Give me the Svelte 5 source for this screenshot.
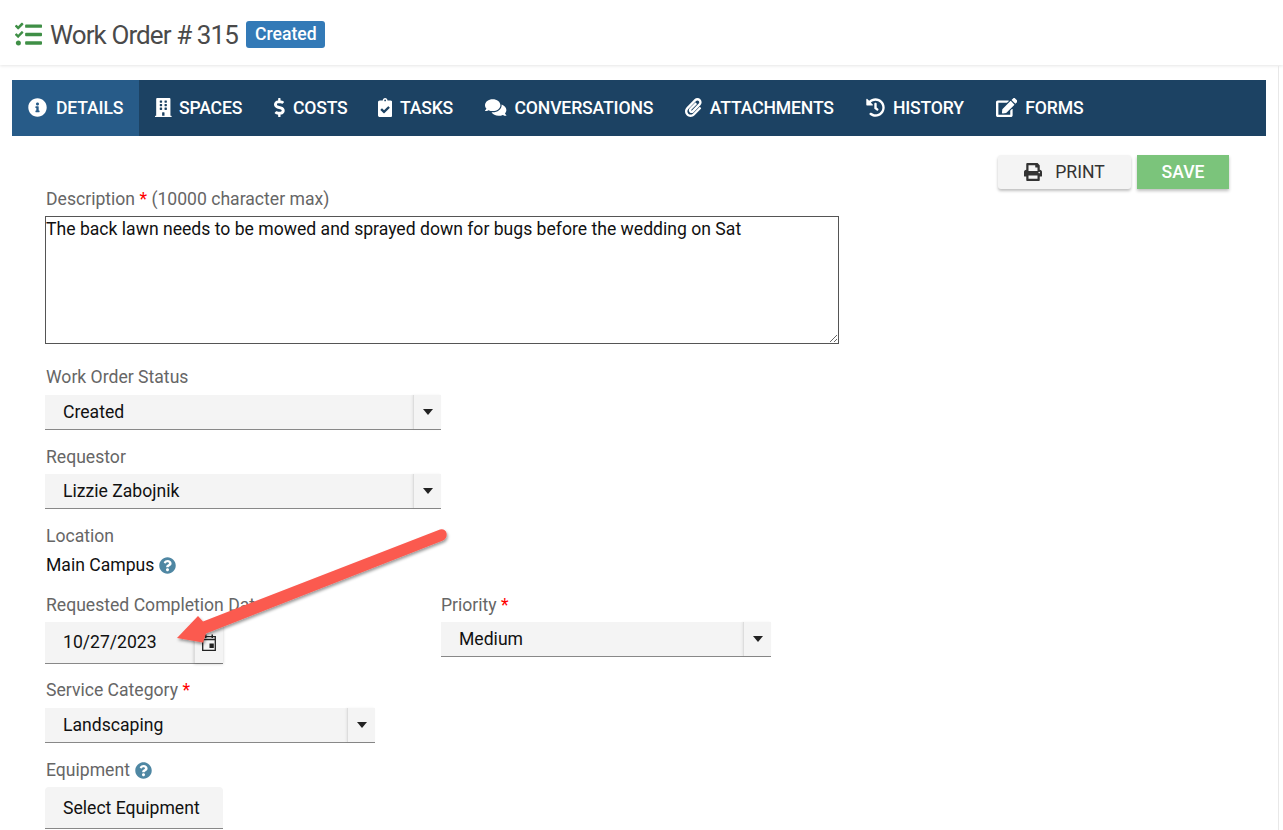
<script>
  const icons = {
    info: [512, 'M256 8C119.043 8 8 119.083 8 256c0 136.997 111.043 248 248 248s248-111.003 248-248C504 119.083 392.957 8 256 8zm0 110c23.196 0 42 18.804 42 42s-18.804 42-42 42-42-18.804-42-42 18.804-42 42-42zm56 254c0 6.627-5.373 12-12 12h-88c-6.627 0-12-5.373-12-12v-24c0-6.627 5.373-12 12-12h12v-64h-12c-6.627 0-12-5.373-12-12v-24c0-6.627 5.373-12 12-12h64c6.627 0 12 5.373 12 12v100h12c6.627 0 12 5.373 12 12v24z'],
    building: [448, 'M436 480h-20V24c0-13.255-10.745-24-24-24H56C42.745 0 32 10.745 32 24v456H12c-6.627 0-12 5.373-12 12v20h448v-20c0-6.627-5.373-12-12-12zM128 76c0-6.627 5.373-12 12-12h40c6.627 0 12 5.373 12 12v40c0 6.627-5.373 12-12 12h-40c-6.627 0-12-5.373-12-12V76zm0 96c0-6.627 5.373-12 12-12h40c6.627 0 12 5.373 12 12v40c0 6.627-5.373 12-12 12h-40c-6.627 0-12-5.373-12-12v-40zm52 148h-40c-6.627 0-12-5.373-12-12v-40c0-6.627 5.373-12 12-12h40c6.627 0 12 5.373 12 12v40c0 6.627-5.373 12-12 12zm76 160h-64v-84c0-6.627 5.373-12 12-12h40c6.627 0 12 5.373 12 12v84zm64-172c0 6.627-5.373 12-12 12h-40c-6.627 0-12-5.373-12-12v-40c0-6.627 5.373-12 12-12h40c6.627 0 12 5.373 12 12v40zm0-96c0 6.627-5.373 12-12 12h-40c-6.627 0-12-5.373-12-12v-40c0-6.627 5.373-12 12-12h40c6.627 0 12 5.373 12 12v40zm0-96c0 6.627-5.373 12-12 12h-40c-6.627 0-12-5.373-12-12V76c0-6.627 5.373-12 12-12h40c6.627 0 12 5.373 12 12v40z'],
    dollar: [288, 'M209.2 233.4l-108-31.6C88.7 198.2 80 186.5 80 173.5c0-16.3 13.2-29.5 29.5-29.5h66.3c12.2 0 24.2 3.7 34.2 10.5 6.1 4.1 14.3 3.1 19.5-2l34.8-34c7.1-6.9 6.1-18.4-1.8-24.5C238 74.8 207.4 64.1 176 64V16c0-8.8-7.2-16-16-16h-32c-8.8 0-16 7.2-16 16v48h-2.5C45.8 64-5.4 118.7.5 183.6c4.2 46.1 39.4 83.6 83.8 96.6l102.5 30c12.5 3.7 21.2 15.3 21.2 28.3 0 16.3-13.2 29.5-29.5 29.5h-66.3C100 368 88 364.3 78 357.5c-6.1-4.1-14.3-3.1-19.5 2l-34.8 34c-7.1 6.9-6.1 18.4 1.8 24.5 24.5 19.2 55.1 29.9 86.5 30v48c0 8.8 7.2 16 16 16h32c8.8 0 16-7.2 16-16v-48.2c46.6-.9 90.3-28.6 105.7-72.7 21.5-61.6-14.6-124.8-72.5-141.7z'],
    task: [384, 'M336 64h-80c0-35.3-28.7-64-64-64s-64 28.7-64 64H48C21.5 64 0 85.5 0 112v352c0 26.5 21.5 48 48 48h288c26.5 0 48-21.5 48-48V112c0-26.5-21.5-48-48-48zM192 40c13.3 0 24 10.7 24 24s-10.7 24-24 24-24-10.7-24-24 10.7-24 24-24zm121.2 231.8l-143 141.800c-4.7 4.7-12.3 4.600-17-.1l-82.600-83.300c-4.700-4.700-4.600-12.300.1-17L99.100 285c4.700-4.700 12.300-4.600 17 .1l46 46.400 106-105.200c4.700-4.700 12.300-4.600 17 .1l28.200 28.400c4.700 4.800 4.600 12.300-.1 17z'],
    comments: [576, 'M416 192c0-88.400-93.100-160-208-160S0 103.600 0 192c0 34.300 14.100 65.900 38 92-13.400 30.200-35.500 54.200-35.800 54.500-2.200 2.300-2.800 5.700-1.500 8.700S4.800 352 8 352c36.600 0 66.900-12.300 88.700-25 32.200 15.700 70.300 25 111.300 25 114.900 0 208-71.600 208-160zm122 220c23.900-26 38-57.700 38-92 0-66.900-53.500-124.200-129.300-148.100.9 6.600 1.300 13.300 1.300 20.100 0 105.900-107.700 192-240 192-10.800 0-21.300-.8-31.700-1.900C207.800 439.600 281.800 480 368 480c41 0 79.100-9.200 111.300-25 21.800 12.700 52.100 25 88.700 25 3.200 0 6.100-1.900 7.300-4.800 1.300-2.900.7-6.300-1.500-8.700-.3-.3-22.400-24.200-35.800-54.500z'],
    clip: [448, 'M43.246 466.142c-58.430-60.289-57.341-157.511 1.386-217.581L254.392 34c44.316-45.332 116.351-45.336 160.671 0 43.890 44.894 43.943 117.329 0 162.276L232.214 383.128c-29.855 30.537-78.633 30.111-107.982-.998-28.275-29.970-27.368-77.473 1.452-106.953l143.743-146.835c6.182-6.314 16.312-6.422 22.626-.241l22.861 22.379c6.315 6.182 6.422 16.312.241 22.626L171.427 319.927c-4.932 5.045-5.236 13.428-.648 18.292 4.372 4.634 11.245 4.711 15.688.165l182.849-186.851c19.613-20.065 19.613-52.724-.011-72.790-19.189-19.627-49.957-19.637-69.154 0L90.390 293.295c-34.763 35.560-35.299 93.120-1.191 128.313 34.010 35.093 88.985 35.137 123.058.286l172.060-175.999c6.177-6.319 16.307-6.433 22.626-.256l22.877 22.364c6.319 6.177 6.434 16.307.256 22.626l-172.060 175.998c-59.576 60.938-155.943 60.216-214.770-.485z'],
    history: [512, 'M504 255.531c.253 136.640-111.180 248.372-247.820 248.468-59.015.042-113.223-20.530-155.822-54.911-11.077-8.940-11.905-25.541-1.839-35.607l11.267-11.267c8.609-8.609 22.353-9.551 31.891-1.984C173.062 425.135 212.781 440 256 440c101.705 0 184-82.311 184-184 0-101.705-82.311-184-184-184-48.814 0-93.149 18.969-126.068 49.932l50.754 50.754c10.080 10.080 2.941 27.314-11.313 27.314H24c-8.837 0-16-7.163-16-16V38.627c0-14.254 17.234-21.393 27.314-11.314l49.372 49.372C129.209 34.136 189.552 8 256 8c136.810 0 247.747 110.780 248 247.531zm-180.912 78.784l9.823-12.630c8.138-10.463 6.253-25.542-4.210-33.679L288 256.349V152c0-13.255-10.745-24-24-24h-16c-13.255 0-24 10.745-24 24v135.651l65.409 50.874c10.463 8.137 25.541 6.253 33.679-4.210z'],
    edit: [576, 'M402.600 83.200l90.200 90.200c3.800 3.800 3.800 10 0 13.800L274.400 405.600l-92.800 10.300c-12.400 1.400-22.900-9.100-21.500-21.500l10.300-92.800L388.800 83.200c3.800-3.800 10-3.800 13.800 0zm162-22.900l-48.800-48.800c-15.200-15.200-39.900-15.200-55.200 0l-35.400 35.400c-3.800 3.800-3.800 10 0 13.800l90.200 90.200c3.800 3.800 10 3.800 13.800 0l35.400-35.400c15.200-15.300 15.200-40 0-55.200zM384 346.200V448H64V128h229.800c3.200 0 6.200-1.300 8.500-3.500l40-40c7.600-7.600 2.200-20.500-8.500-20.500H48C21.500 64 0 85.500 0 112v352c0 26.500 21.500 48 48 48h352c26.500 0 48-21.500 48-48V306.200c0-10.700-12.900-16-20.500-8.500l-40 40c-2.200 2.300-3.500 5.300-3.500 8.500z']
  };
  const tabs = [
    { label: 'Details', icon: 'info', active: true },
    { label: 'Spaces', icon: 'building' },
    { label: 'Costs', icon: 'dollar' },
    { label: 'Tasks', icon: 'task' },
    { label: 'Conversations', icon: 'comments' },
    { label: 'Attachments', icon: 'clip' },
    { label: 'History', icon: 'history' },
    { label: 'Forms', icon: 'edit' }
  ];
  const ICON = 19;
</script>

{#snippet help()}
  <svg class="help" viewBox="0 0 512 512"><path fill="#4f87a3" d="M504 256c0 136.997-111.043 248-248 248S8 392.997 8 256C8 119.083 119.043 8 256 8s248 111.083 248 248zM262.655 90c-54.497 0-89.255 22.957-116.549 63.758-3.536 5.286-2.353 12.415 2.715 16.258l34.699 26.310c5.205 3.947 12.621 3.008 16.665-2.122 17.864-22.658 30.113-35.797 57.303-35.797 20.429 0 45.698 13.148 45.698 32.958 0 14.976-12.363 22.667-32.534 33.976C247.128 238.528 216 254.941 216 296v4c0 6.627 5.373 12 12 12h56c6.627 0 12-5.373 12-12v-1.333c0-28.462 83.186-29.647 83.186-106.667 0-58.002-60.165-102-116.531-102zM256 338c-25.365 0-46 20.635-46 46 0 25.364 20.635 46 46 46s46-20.636 46-46c0-25.365-20.635-46-46-46z"/></svg>
{/snippet}

{#snippet arrowDown()}
  <span class="caret"><svg viewBox="0 0 10 6" width="10" height="6"><path d="M0 0h10L5 6z" fill="#222"/></svg></span>
{/snippet}

<div class="page">
  <header class="top">
    <svg class="logo" viewBox="0 0 512 512" width="27" height="27" fill="#3f8f46"><path d="M139.610 35.500a12 12 0 0 0-17 0L58.930 98.810l-22.700-22.120a12 12 0 0 0-17 0L3.530 92.410a12 12 0 0 0 0 17l47.590 47.400a12.780 12.780 0 0 0 17.610 0l15.590-15.620L156.520 69a12.090 12.090 0 0 0 .09-17zm0 159.190a12 12 0 0 0-17 0l-63.680 63.720-22.700-22.100a12 12 0 0 0-17 0L3.530 252a12 12 0 0 0 0 17L51 316.500a12.770 12.770 0 0 0 17.600 0l15.700-15.690 72.200-72.220a12 12 0 0 0 .09-16.900zM64 368c-26.490 0-48.590 21.500-48.590 48S37.530 464 64 464a48 48 0 0 0 0-96zm432 16H208a16 16 0 0 0-16 16v32a16 16 0 0 0 16 16h288a16 16 0 0 0 16-16v-32a16 16 0 0 0-16-16zm0-320H208a16 16 0 0 0-16 16v32a16 16 0 0 0 16 16h288a16 16 0 0 0 16-16V80a16 16 0 0 0-16-16zm0 160H208a16 16 0 0 0-16 16v32a16 16 0 0 0 16 16h288a16 16 0 0 0 16-16v-32a16 16 0 0 0-16-16z"/></svg>
    <h1>Work Order # 315</h1>
    <span class="badge">Created</span>
  </header>

  <main class="content">
    <nav class="tabs">
      {#each tabs as t}
        <div class="tab {t.icon}" class:active={t.active}>
          <svg viewBox="0 0 {icons[t.icon][0]} 512" width={icons[t.icon][0] / 512 * ICON} height={ICON} fill="#fff"><path d={icons[t.icon][1]}/></svg>
          {t.label}
        </div>
      {/each}
    </nav>

    <div class="actions">
      <button class="btn print">
        <svg viewBox="0 0 512 512" width="18" height="18" fill="#333"><path d="M448 192V77.250c0-8.490-3.370-16.620-9.370-22.630L393.370 9.370c-6-6-14.140-9.370-22.630-9.370H96C78.330 0 64 14.330 64 32v160c-35.350 0-64 28.650-64 64v112c0 8.840 7.160 16 16 16h48v96c0 17.670 14.330 32 32 32h320c17.670 0 32-14.330 32-32v-96h48c8.840 0 16-7.160 16-16V256c0-35.350-28.650-64-64-64zm-64 256H128v-96h256v96zm0-224H128V64h192v48c0 8.840 7.160 16 16 16h48v96zm48 72c-13.250 0-24-10.750-24-24 0-13.260 10.750-24 24-24s24 10.740 24 24c0 13.250-10.750 24-24 24z"/></svg>
        PRINT
      </button>
      <button class="btn save">SAVE</button>
    </div>

    <div class="form">
      <label class="lbl">Description <span class="req">*</span> (10000 character max)</label>
      <textarea class="ta">The back lawn needs to be mowed and sprayed down for bugs before the wedding on Sat</textarea>

      <label class="lbl status">Work Order Status</label>
      <div class="select w396"><span class="val">Created</span>{@render arrowDown()}</div>

      <label class="lbl req-l">Requestor</label>
      <div class="select w396 tight"><span class="val">Lizzie Zabojnik</span>{@render arrowDown()}</div>

      <label class="lbl loc">Location</label>
      <div class="static">Main Campus {@render help()}</div>

      <div class="row">
        <div class="col">
          <label class="lbl">Requested Completion Date</label>
          <div class="date">
            <span class="val">10/27/2023</span>
            <span class="cal">
              <svg viewBox="0 0 14 17" width="14" height="17"><path d="M.7 2.700h12.600v13.600H.7zM.7 5.500h12.600" fill="none" stroke="#222" stroke-width="1.300"/><path d="M3 0.500h1.500v3.500H3zM9.500 0.500H11v3.500H9.500z" fill="#222"/><rect x="7.500" y="9.500" width="4.300" height="4.500" fill="#222"/></svg>
            </span>
          </div>
        </div>
        <div class="col">
          <label class="lbl flush">Priority <span class="req">*</span></label>
          <div class="select w330 tight"><span class="val">Medium</span>{@render arrowDown()}</div>
        </div>
      </div>

      <label class="lbl svc">Service Category <span class="req">*</span></label>
      <div class="select w330"><span class="val">Landscaping</span>{@render arrowDown()}</div>

      <label class="lbl eq">Equipment {@render help()}</label>
      <div class="equip">Select Equipment</div>
    </div>
  </main>

  <svg class="arrow" viewBox="0 0 1283 830" width="1283" height="830">
    <defs>
      <filter id="sh" x="-10%" y="-10%" width="120%" height="130%"><feDropShadow dx="1" dy="2" stdDeviation="1.800" flood-color="#000" flood-opacity=".4"/></filter>
    </defs>
    <path d="M440 529.500 Q445 528.500 446.500 533 Q447.500 538 443 540.500 L206 633.500 L203 642.500 L177 638 L198 616 L203 621.500 Z" fill="#fb5a50" filter="url(#sh)"/>
  </svg>
  <div class="edge"></div>
</div>

<style>
  :global(body) { margin: 0; background: #fff; font-family: Roboto, "Liberation Sans", sans-serif; }
  .page { position: relative; width: 1283px; height: 830px; overflow: hidden; }
  .edge { position: absolute; top: 66px; right: 4px; bottom: 0; width: 1px; background: #e8e8e8; }
  .top { height: 65px; box-sizing: border-box; display: flex; align-items: center; padding: 4px 0 0 15px; box-shadow: 0 1px 3px rgba(0,0,0,.1); }
  .logo { margin-right: 8px; }
  h1 { margin: 0; font-size: 26px; font-weight: 400; color: #4a4a4a; letter-spacing: -0.9px; }
  .badge { margin-left: 8px; background: #337ab7; color: #fff; font-size: 17.6px; font-weight: 500; padding: 0 8px 0 9px; height: 27px; line-height: 27px; border-radius: 3px; }
  .content { padding: 15px 0 0 12px; }
  .tabs { width: 1254px; height: 56px; background: #1c4263; display: flex; color: #fff; }
  .tab { display: flex; align-items: center; box-sizing: border-box; height: 100%; padding: 0 16px 1px; gap: 8px; text-transform: uppercase; font-size: 17.6px; font-weight: 500; letter-spacing: -0.15px; }
  .tab.active { background: #275b88; gap: 9px; }
  .tab.building { gap: 7px; }
  .tab.task { margin-left: -2px; }
  .actions { display: flex; justify-content: flex-end; gap: 6px; padding: 19px 54px 0 0; height: 34px; }
  .btn { border: 0; height: 34px; font: 400 17.6px Roboto, sans-serif; display: flex; align-items: center; justify-content: center; box-shadow: 0 2px 3px rgba(0,0,0,.25); }
  .print { width: 133px; background: #f4f4f4; color: #333; gap: 13px; border-radius: 3px; }
  .save { width: 92px; background: #7bc47b; color: #fff; font-weight: 500; }
  .form { padding-left: 33px; }
  .lbl { display: block; padding-left: 1px; font-size: 17.6px; line-height: 20px; color: #666; }
  .lbl.flush { padding-left: 0; }
  .req { color: #f00; }
  .ta { display: block; box-sizing: border-box; width: 794px; height: 128px; margin: 7px 0 0; padding: 0; border: 1px solid #555; font: 17.6px/24px Roboto, sans-serif; color: #111; background: #fff; border-radius: 0; }
  .status { margin-top: 23px; }
  .select { display: flex; align-items: center; justify-content: space-between; box-sizing: border-box; height: 35px; margin-top: 8px; background: #f4f4f4; border-bottom: 1px solid #888; font-size: 17.6px; line-height: 32px; color: #111; }
  .select.tight { margin-top: 7px; }
  .w396 { width: 396px; }
  .w330 { width: 330px; }
  .val { padding-left: 18px; }
  .caret { width: 27px; height: 100%; display: flex; align-items: center; justify-content: center; border-left: 1px solid #ddd; box-shadow: -1px 0 2px rgba(0,0,0,.06); }
  .req-l, .loc { margin-top: 17px; }
  .static { display: flex; align-items: center; gap: 5px; margin-top: 9px; padding-left: 1px; height: 20px; font-size: 17.6px; color: #111; }
  .help { width: 17px; height: 17px; }
  .row { display: flex; margin-top: 20px; }
  .col { width: 396px; }
  .date { width: 178px; height: 42px; margin-top: 7px; box-sizing: border-box; background: #f4f4f4; border-bottom: 1px solid #888; display: flex; align-items: center; justify-content: space-between; font-size: 17.6px; color: #111; }
  .date .val { margin-bottom: 2px; }
  .cal { width: 28px; height: 100%; display: flex; align-items: center; justify-content: center; border-left: 1px solid #ddd; box-shadow: 0 1px 3px rgba(0,0,0,.2); }
  .svc { margin-top: 16px; }
  .eq { margin-top: 17px; display: flex; align-items: center; gap: 5px; }
  .equip { box-sizing: border-box; width: 178px; height: 42px; margin-top: 7px; padding-left: 18px; background: #f4f4f4; border-bottom: 1px solid #888; border-radius: 4px 4px 0 0; display: flex; align-items: center; font-size: 17.6px; color: #111; }
  .arrow { position: absolute; left: 0; top: 0; pointer-events: none; }
</style>
